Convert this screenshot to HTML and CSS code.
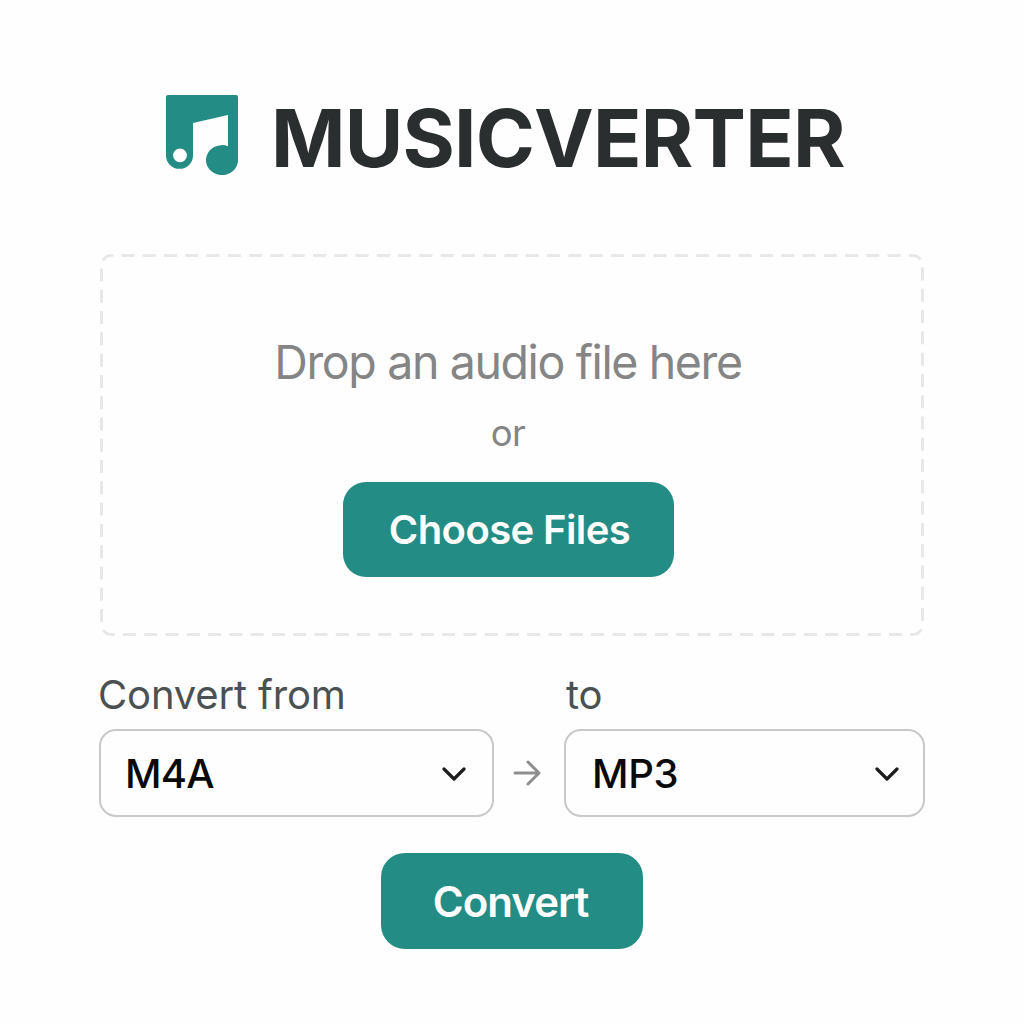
FILE: index.html
```html
<!DOCTYPE html>
<html lang="en">
  <head>
    <meta charset="UTF-8" />
    <meta name="viewport" content="width=device-width, initial-scale=1.0" />
    <title>Musicverter</title>
    <link rel="stylesheet" href="styles.css">
  </head>
  <body>
    <header class="header">
      <svg class="logo" viewBox="0 0 72 80">
        <path fill-rule="evenodd" d="M2 0H70Q72 0 72 2V64.5A16 15 0 1 1 62 51.2V20L27 28V60.5A13.5 13.3 0 0 1 0 60.5V2Q0 0 2 0ZM14 53.4A6.9 6.9 0 1 0 14 67.2A6.9 6.9 0 1 0 14 53.4Z" />
      </svg>
      <h1 class="title">MUSICVERTER</h1>
    </header>
    <main class="container">
      <div class="dropzone">
        <svg class="dropzone-border" viewBox="0 0 824 382">
          <rect x="1.5" y="1.5" width="821" height="379" rx="10" />
        </svg>
        <p class="drop-text">Drop an audio file here</p>
        <p class="drop-or">or</p>
        <button class="btn btn-choose" type="button">Choose Files</button>
      </div>
      <div class="formats">
        <div class="field field-from">
          <label class="label" for="from">Convert from</label>
          <div class="select-wrap">
            <select class="select" id="from">
              <option>M4A</option>
            </select>
            <svg class="chevron" viewBox="0 0 24 14"><path d="M2 2L12 12L22 2" /></svg>
          </div>
        </div>
        <svg class="arrow" viewBox="0 0 28 26"><path d="M2 13H26M15 2L26 13L15 24" /></svg>
        <div class="field field-to">
          <label class="label" for="to">to</label>
          <div class="select-wrap">
            <select class="select" id="to">
              <option>MP3</option>
            </select>
            <svg class="chevron" viewBox="0 0 24 14"><path d="M2 2L12 12L22 2" /></svg>
          </div>
        </div>
      </div>
      <button class="btn btn-convert" type="button">Convert</button>
    </main>
  </body>
</html>
```
FILE: styles.css
```css
* {
  box-sizing: border-box;
}
body {
  margin: 0;
  font-family: Inter, "Liberation Sans", sans-serif;
  background-color: #fefefe;
}
.header {
  display: flex;
  align-items: flex-start;
  padding: 95px 0 0 166px;
  height: 254px;
}
.logo {
  width: 72px;
  height: 80px;
  fill: #238c84;
}
.title {
  margin: 3px 0 0 33px;
  font-size: 80px;
  line-height: 80px;
  font-weight: 700;
  letter-spacing: -0.8px;
  color: #2b2e2f;
  white-space: nowrap;
}
.container {
  width: 826px;
  margin-left: 99px;
  display: flex;
  flex-direction: column;
}
.dropzone {
  position: relative;
  width: 824px;
  height: 382px;
  margin-left: 1px;
  padding: 78px 0 0;
  display: flex;
  flex-direction: column;
  align-items: center;
}
.dropzone-border {
  position: absolute;
  inset: 0;
  fill: none;
  stroke: #e8e8e8;
  stroke-width: 3;
  stroke-dasharray: 13 8.28;
  stroke-dashoffset: -10;
}
.drop-text,
.drop-or {
  margin: 0 8px 0 0;
  color: #858585;
}
.drop-text {
  font-size: 46.5px;
  line-height: 60px;
  letter-spacing: -1.38px;
}
.drop-or {
  margin-top: 16px;
  font-size: 36.5px;
  line-height: 50px;
  letter-spacing: -0.5px;
}
.btn {
  padding: 0;
  border: none;
  color: #fff;
  background-color: #238c84;
  font-family: inherit;
  font-weight: 600;
  cursor: pointer;
}
.btn-choose {
  width: 331px;
  height: 95px;
  margin: 24px 7px 0 0;
  padding-left: 2px;
  border-radius: 23px;
  font-size: 40px;
  letter-spacing: -0.6px;
}
.formats {
  display: flex;
  align-items: flex-end;
  margin-top: 34px;
}
.field-from {
  width: 395px;
}
.field-to {
  width: 361px;
}
.label {
  display: block;
  height: 59px;
  font-size: 40px;
  line-height: 50px;
  letter-spacing: -0.15px;
  color: #4b5152;
}
.field-from .label {
  margin-left: -1px;
}
.field-to .label {
  margin-left: 2px;
}
.select-wrap {
  position: relative;
}
.select {
  display: block;
  width: 100%;
  height: 88px;
  padding: 0 24px;
  border: 2px solid #c9c9c9;
  border-radius: 17px;
  appearance: none;
  font-family: inherit;
  font-size: 40px;
  font-weight: 500;
  letter-spacing: -0.8px;
  color: #0a0a0a;
  background-color: #fefefe;
}
.field-to .select {
  padding-left: 26px;
  letter-spacing: -0.3px;
}
.chevron {
  position: absolute;
  top: 38px;
  right: 28px;
  width: 24px;
  height: 14px;
  fill: none;
  stroke: #1d1d1f;
  stroke-width: 3.2;
  stroke-linecap: round;
  stroke-linejoin: round;
  pointer-events: none;
}
.field-to .chevron {
  right: 26px;
}
.arrow {
  width: 28px;
  height: 26px;
  margin: 0 23px 31px 19px;
  fill: none;
  stroke: #8e8e8e;
  stroke-width: 3;
  stroke-linecap: round;
  stroke-linejoin: round;
}
.btn-convert {
  align-self: center;
  width: 262px;
  height: 96px;
  margin-top: 36px;
  padding-right: 3px;
  border-radius: 24px;
  font-size: 42px;
  letter-spacing: -1px;
}
```
